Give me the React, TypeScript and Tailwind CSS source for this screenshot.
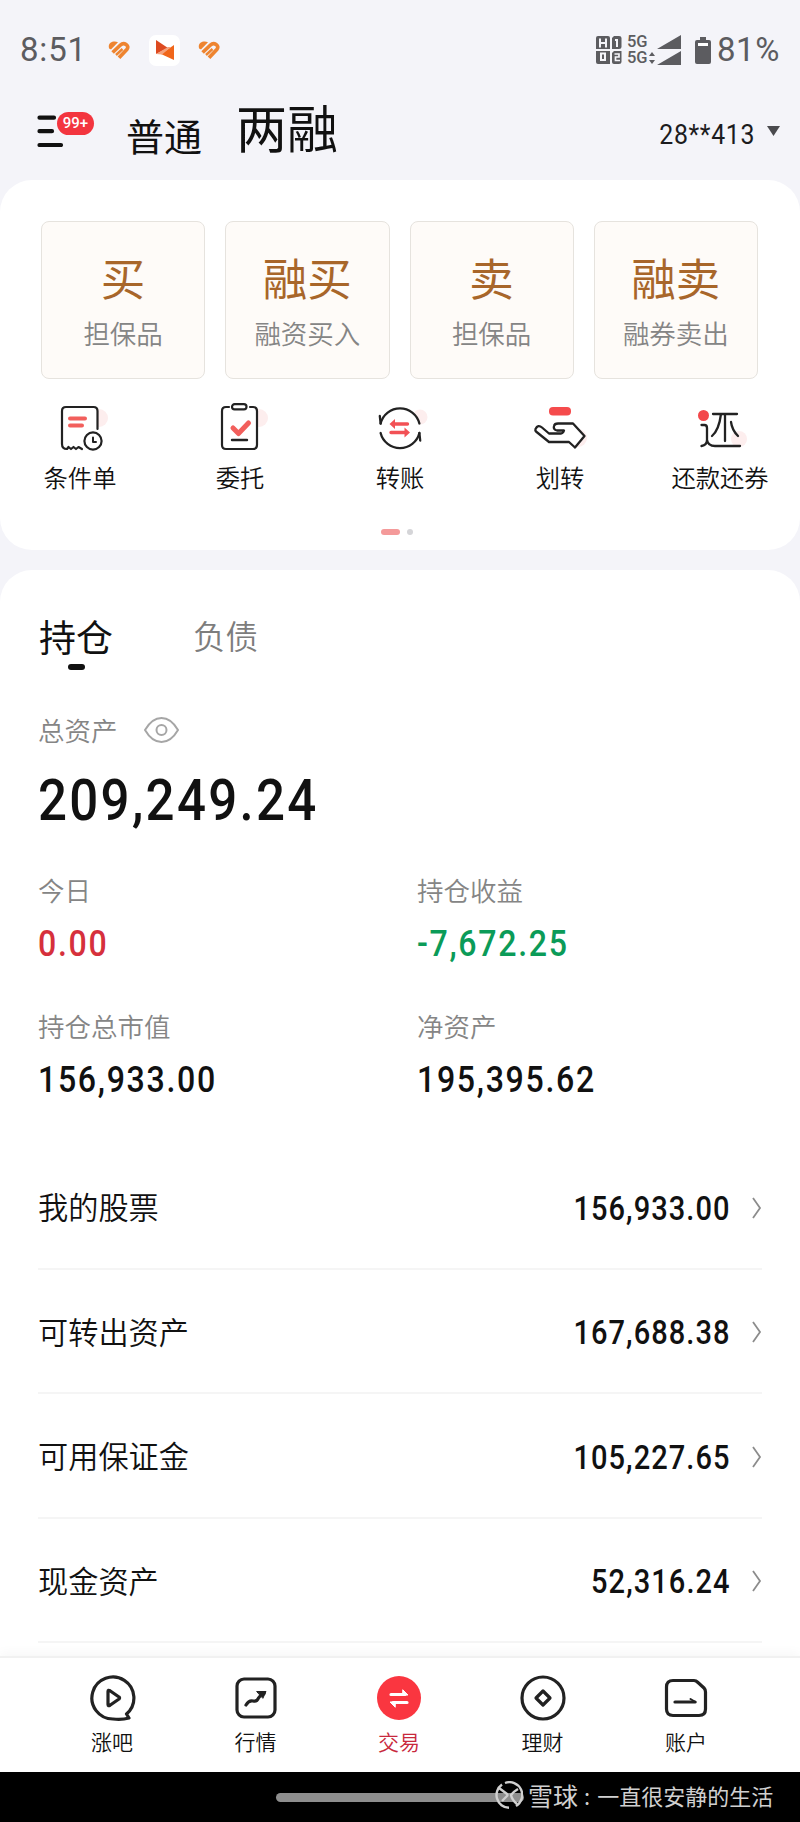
import { ReactNode } from 'react';

const cjk = 'font-["Noto_Sans_CJK_SC",sans-serif]';
const num = 'font-["Roboto","Noto_Sans_CJK_SC",sans-serif]';

const tradeCards = [
  { title: '买', desc: '担保品' },
  { title: '融买', desc: '融资买入' },
  { title: '卖', desc: '担保品' },
  { title: '融卖', desc: '融券卖出' },
];

const assetRows = [
  { label: '我的股票', value: '156,933.00' },
  { label: '可转出资产', value: '167,688.38' },
  { label: '可用保证金', value: '105,227.65' },
  { label: '现金资产', value: '52,316.24' },
];

const HeartLogo = () => (
  <svg width="22" height="19" viewBox="0 0 22 19" fill="none" stroke="#ee8430">
    <path d="M1 7 C-0.500 2 5 -0.800 10 1.200 L3.200 8.200 Q1.500 8.500 1 7 Z" fill="#ee8430" stroke="none" />
    <path d="M4.600 11.500 L12.500 4 C16 0.600 21.800 4.600 19 8.200 L11 16.800" strokeWidth="3.700" />
    <path d="M8 14 L14.500 8" strokeWidth="2.400" />
  </svg>
);

const AppLogo = () => (
  <div className="flex h-[31px] w-[31px] items-center justify-center rounded-[7px] bg-white">
    <svg width="18" height="20" viewBox="0 0 18 20">
      <path d="M0 0 L12 8 L0 14 Z" fill="#dd4a20" />
      <path d="M18 5 V20 L5 14 Z" fill="#f0661a" />
      <path d="M0 14 L12 7 L15 7 L6 14.500 Z" fill="#f5a27c" />
    </svg>
  </div>
);

const StatusBar = () => (
  <div className="flex h-[100px] items-center pl-[20px] pr-[20px] text-[#5c5c60]">
    <span className={`${num} w-[88px] text-[33px] leading-[40px] tracking-[0.8px]`}>8:51</span>
    <HeartLogo />
    <div className="ml-[19px] mr-[18px]">
      <AppLogo />
    </div>
    <HeartLogo />
    <div className="ml-auto flex items-center">
      <svg width="26" height="28" viewBox="0 0 26 28">
        <path
          d="M2 0 H12 Q14 0 14 2 V28 H2 Q0 28 0 26 V2 Q0 0 2 0 Z M18 0 H23 Q25.500 0 25.500 2 V11 Q25.500 13 23 13 H16 V2 Z M18 15 H25.500 V26 Q25.500 28 23 28 H18 Q16 28 16 26 V17 Z"
          fill="#5c5c60"
        />
        <g stroke="#f4f4f9" strokeWidth="2" fill="none">
          <path d="M4 2.500 V11.500 M10 2.500 V11.500 M4 7 H10 M0 14 H14" />
          <path d="M5 17.500 H9 V24 H5 Z" />
          <path d="M19 4 H21 V11" />
          <path d="M18.500 18 H23 V21 H19.500 V24.500 H24" strokeWidth="1.700" />
        </g>
      </svg>
      <div className={`${num} ml-[5px] flex w-[22px] flex-col text-[16.5px] font-medium leading-[16px]`}>
        <span>5G</span>
        <span>5G</span>
      </div>
      <svg width="32" height="30" viewBox="0 0 32 30" fill="#5c5c60">
        <path d="M3 17 L6 21 H0 Z M3 29 L0 25 H6 Z" />
        <path d="M32 0 V14 H8 Z M32 16 V30 H8 Z" />
      </svg>
      <svg className="ml-[14px] mr-[6px]" width="16" height="27" viewBox="0 0 16 27">
        <path d="M5 0 H11 V3 H14 Q16 3 16 5 V25 Q16 27 14 27 H2 Q0 27 0 25 V5 Q0 3 2 3 H5 Z" fill="#5c5c60" />
        <path d="M3 6 H13 V9 H3 Z" fill="#fff" />
      </svg>
      <span className={`${num} text-[33px] leading-[40px] tracking-[0.6px]`}>81%</span>
    </div>
  </div>
);

const Header = () => (
  <header className="flex h-[80px] pl-[37px] pr-[20px]">
    <div className="relative mt-[15px] h-[32px] w-[89px]">
      <svg width="27" height="32" viewBox="0 0 27 32" stroke="#111" strokeWidth="4.200" strokeLinecap="round">
        <path d="M2.500 2.700 H17 M2.500 16.200 H15 M2.500 30 H24" />
      </svg>
      <span className={`${num} absolute -top-[3px] left-[20px] flex h-[23px] w-[37px] items-center justify-center rounded-full bg-[#f3353f] text-[15px] font-medium text-white`}>
        99+
      </span>
    </div>
    <span className="mt-[7px] text-[38px] leading-[56px] text-[#111]">普通</span>
    <span className="-mt-[9px] ml-[34px] text-[51px] leading-[70px] text-[#111]">两融</span>
    <div className="ml-auto mt-[19px] flex h-[32px] items-center">
      <span className={`${num} origin-right scale-x-[0.92] text-[27px] leading-[32px] tracking-[0.7px] text-[#1c1c1e]`}>28**413</span>
      <svg className="-mt-[9px] ml-[12px]" width="13" height="10" viewBox="0 0 13 10" fill="#4a4a4e">
        <path d="M0 0 H13 L6.500 10 Z" />
      </svg>
    </div>
  </header>
);

const OrderIcon = () => (
  <svg className="translate-x-[7px]" width="56" height="52" viewBox="0 0 56 52" fill="none" strokeLinecap="round" strokeLinejoin="round">
    <circle cx="40" cy="16" r="9" fill="#fdeeee" />
    <path
      d="M38.500 27 V9 Q38.500 5 34.500 5 H7 Q3 5 3 9 V42 Q3 47 8 47 L9.500 45 L12 47 L14.500 45 L17 47 L19.500 45 L23 47"
      fill="#fff"
      stroke="#222"
      strokeWidth="2.200"
    />
    <path d="M11 16.500 H26 M11 23.500 H23" stroke="#f25f5c" strokeWidth="4" />
    <circle cx="34" cy="39" r="8.600" fill="#fff" stroke="#222" strokeWidth="2.200" />
    <path d="M34 35.500 V40 H37" stroke="#222" strokeWidth="2" />
  </svg>
);

const EntrustIcon = () => (
  <svg className="translate-x-[7px]" width="56" height="52" viewBox="0 0 56 52" fill="none" strokeLinecap="round" strokeLinejoin="round">
    <circle cx="40" cy="16" r="9" fill="#fdeeee" />
    <path
      d="M10 5 H7 Q3 5 3 9 V43 Q3 47 7 47 H34 Q38 47 38 43 V9 Q38 5 34 5 H31"
      fill="#fff"
      stroke="#222"
      strokeWidth="2.200"
    />
    <rect x="13" y="2.200" width="14.500" height="5.200" rx="2.600" stroke="#222" strokeWidth="2.200" />
    <path d="M14 26 L19.500 31.500 L29.500 21" stroke="#f25f5c" strokeWidth="5" />
    <path d="M13 38 H28" stroke="#222" strokeWidth="2.400" />
  </svg>
);

const TransferIcon = () => (
  <svg width="56" height="52" viewBox="0 0 56 52" fill="none" strokeLinecap="round" strokeLinejoin="round">
    <circle cx="48" cy="15" r="7.500" fill="#fdeeee" />
    <circle cx="28" cy="26" r="19.500" fill="#fff" />
    <g stroke="#222" strokeWidth="2.300">
      <path d="M8.600 21.500 A20 20 0 0 1 47.400 21.500 M47.400 31 A20 20 0 0 1 8.600 31" />
      <path d="M7.800 14 L8.600 21.500 M48.200 38.500 L47.400 31" />
    </g>
    <g stroke="#f25155" strokeWidth="3.400">
      <path d="M22 22 H35.500 M19 30.500 H34" />
    </g>
    <path d="M17.500 22 L23 17 V27 Z M38 30.500 L32.500 25.500 V35.500 Z" fill="#f25155" />
  </svg>
);

const HandIcon = () => (
  <svg width="56" height="52" viewBox="0 0 56 52" fill="none" strokeLinecap="round" strokeLinejoin="round">
    <circle cx="46" cy="36" r="9" fill="#fdeeee" />
    <rect x="17" y="5" width="22" height="8.500" rx="4" fill="#f54b4c" />
    <path
      d="M3.500 27 Q6 22 10 25.500 L17 31.500 H29 Q31 31.500 32 28.500 H25 Q21 27.500 22 24 Q22.500 21.500 26 21.500 H41 L52.500 34 L43 45.500 L37 40 H17 L4 29.500 Q3 28.500 3.500 27 Z"
      fill="#fff"
      stroke="#222"
      strokeWidth="2.300"
    />
  </svg>
);

const RepayIcon = () => (
  <svg width="56" height="52" viewBox="0 0 56 52" fill="none" strokeLinecap="round" strokeLinejoin="round">
    <circle cx="47" cy="37" r="8" fill="#fdeeee" />
    <circle cx="11.500" cy="13.500" r="5.500" fill="#f3484b" />
    <g stroke="#222" strokeWidth="2.300">
      <path d="M9.500 23 H12.500 Q15 23 15 26 V38 Q15 43 9.500 44 M15 38 Q16 44 23 44 H48" />
      <path d="M21 12 H45 M33 12 V39 M29 12 Q27 28 20 34 M39 20 Q40 28 46 34" />
    </g>
  </svg>
);

const shortcuts: { label: string; icon: ReactNode }[] = [
  { label: '条件单', icon: <OrderIcon /> },
  { label: '委托', icon: <EntrustIcon /> },
  { label: '转账', icon: <TransferIcon /> },
  { label: '划转', icon: <HandIcon /> },
  { label: '还款还券', icon: <RepayIcon /> },
];

const TradePanel = () => (
  <section className="h-[370px] rounded-[32px] bg-white pt-[41px]">
    <div className="grid grid-cols-4 gap-[20px] pl-[41px] pr-[42px]">
      {tradeCards.map((c, i) => (
        <div key={i} className="flex h-[158px] flex-col items-center rounded-[8px] border border-[#e6e3de] bg-[#fefbf8] pt-[22px]">
          <span className="text-[44.5px] leading-[66px] text-[#a8662a]">{c.title}</span>
          <span className="mt-[5px] text-[26.5px] font-[350] leading-[36px] text-[#858585]">{c.desc}</span>
        </div>
      ))}
    </div>
    <div className="mt-[23px] grid grid-cols-5">
      {shortcuts.map((s) => (
        <div key={s.label} className="flex flex-col items-center">
          {s.icon}
          <span className="mt-[5px] text-[24.3px] font-[350] leading-[36px] text-[#111]">{s.label}</span>
        </div>
      ))}
    </div>
    <div className="mt-[34px] flex items-center justify-center gap-[7px] pr-[6px]">
      <span className="h-[6px] w-[19px] rounded-full bg-[#f49a9a]" />
      <span className="h-[6px] w-[6px] rounded-full bg-[#d5d5d8]" />
    </div>
  </section>
);

const Stat = ({ label, value, color }: { label: string; value: string; color: string }) => (
  <div className="h-[136px]">
    <p className="text-[26.5px] font-[350] leading-[38px] text-[#858585]">{label}</p>
    <p className={`${num} mt-[12px] origin-left scale-x-[0.88] text-[36.5px] font-medium leading-[46px] tracking-[1.9px] ${color}`}>{value}</p>
  </div>
);

const Holdings = () => (
  <section className="h-[1086px] overflow-hidden rounded-t-[32px] bg-white px-[38px] pt-[40px]">
    <div className="flex h-[60px] items-start">
      <div className="relative pl-px text-[37px] leading-[52px] text-[#111]">
        持仓
        <span className="absolute left-[30px] top-[54px] h-[6px] w-[17px] rounded-full bg-[#111]" />
      </div>
      <span className="ml-[80px] text-[32.5px] font-[350] leading-[50px] text-[#7d7d7d]">负债</span>
    </div>
    <div className="mt-[41px] flex items-center">
      <span className="text-[26.5px] font-[350] leading-[38px] text-[#858585]">总资产</span>
      <svg className="ml-[26px]" width="35" height="26" viewBox="0 0 35 26" fill="none" stroke="#a6a6a6" strokeWidth="2">
        <path d="M1 13 Q8 1 17.500 1 Q27 1 34 13 Q27 25 17.500 25 Q8 25 1 13 Z" />
        <circle cx="17.500" cy="13" r="5" />
      </svg>
    </div>
    <p className={`${num} mt-[16px] origin-left scale-x-[0.88] text-[58px] font-medium leading-[70px] tracking-[2.6px] text-[#111]`}>209,249.24</p>
    <div className="mt-[36px] grid grid-cols-[379px_1fr]">
      <Stat label="今日" value="0.00" color="text-[#d6303c]" />
      <Stat label="持仓收益" value="-7,672.25" color="text-[#0b9b58]" />
      <Stat label="持仓总市值" value="156,933.00" color="text-[#111]" />
      <Stat label="净资产" value="195,395.62" color="text-[#111]" />
    </div>
    <div className="mt-[2px]">
      {assetRows.map((r) => (
        <div key={r.label} className="flex h-[124.5px] items-center border-b-2 border-[#f5f5f5]">
          <span className="text-[30.2px] font-[350] leading-[44px] text-[#111]">{r.label}</span>
          <span className={`${num} ml-auto mt-[5px] origin-right scale-x-[0.88] text-[33px] font-medium leading-[44px] tracking-[1.2px] text-[#111]`}>
            {r.value}
          </span>
          <svg className="ml-[21px] mt-[3px]" width="10" height="22" viewBox="0 0 10 22" fill="none" stroke="#8c8c8c" strokeWidth="1.800">
            <path d="M1 1 L8 11 L1 21" />
          </svg>
        </div>
      ))}
    </div>
  </section>
);

const tabs: { label: string; active?: boolean; icon: ReactNode }[] = [
  {
    label: '涨吧',
    icon: (
      <>
        <path d="M38.500 40 A21 21 0 1 0 25 45 Q34 46 41 44 Z" />
        <path d="M20 17.500 V30.500 Q20 32.500 22 31.300 L31 25 Q32 24 31 23 L22 16.700 Q20 15.500 20 17.500 Z" />
      </>
    ),
  },
  {
    label: '行情',
    icon: (
      <>
        <rect x="5" y="5" width="38" height="38" rx="7" />
        <path d="M14 31 Q17 26 21 27 Q25 28 26.500 24 Q28 21 32 19.500" />
        <path d="M25 17.500 H34 L31 24 Z" fill="#222" strokeWidth="1" />
      </>
    ),
  },
  {
    label: '交易',
    active: true,
    icon: (
      <>
        <circle cx="24" cy="24" r="22" fill="#fa3640" stroke="none" />
        <path d="M16 20.500 H30 M18 28.500 H32" stroke="#fff" />
        <path d="M28 16 L33 21 H28 Z M20 33 L15 28 H20 Z" fill="#fff" stroke="#fff" strokeWidth="1" />
      </>
    ),
  },
  {
    label: '理财',
    icon: (
      <>
        <circle cx="24" cy="24" r="21" />
        <path d="M24 17 L31 24 L24 31 L17 24 Z" />
      </>
    ),
  },
  {
    label: '账户',
    icon: (
      <>
        <path d="M11 6.500 H32 Q34 6.500 36 8.500 L42 14 Q43.500 15.500 43.500 18 V35 Q43.500 41.500 37 41.500 H11 Q4.500 41.500 4.500 35 V13 Q4.500 6.500 11 6.500 Z" />
        <path d="M13 28 H33" />
        <path d="M28.500 25 L33.500 28" strokeWidth="2" />
      </>
    ),
  },
];

const TabBar = () => (
  <nav className="relative flex h-[116px] justify-center border-t-2 border-[#f1f1f1] bg-white pr-[2px] pt-[16px] shadow-[0_-4px_10px_rgba(0,0,0,0.03)]">
    {tabs.map((t) => (
      <div key={t.label} className="flex w-[143.5px] flex-col items-center">
        <svg width="48" height="48" viewBox="0 0 48 48" fill="none" stroke="#222" strokeWidth="3.200" strokeLinecap="round" strokeLinejoin="round">
          {t.icon}
        </svg>
        <span className={`mt-[4px] text-[21px] font-[350] leading-[30px] ${t.active ? 'text-[#c8283c]' : 'text-[#111]'}`}>{t.label}</span>
      </div>
    ))}
  </nav>
);

const GestureBar = () => (
  <footer className="relative flex h-[50px] items-center justify-center bg-black">
    <div className="h-[9px] w-[248px] rounded-full bg-[#8e8e8e]" />
    <div className="absolute left-[495px] top-[7px] flex h-[32px] items-center text-[#d0d0d0]">
      <svg width="28" height="28" viewBox="0 0 28 28" fill="none" stroke="#d0d0d0" strokeWidth="2.400">
        <path d="M7 3.500 A12.800 12.800 0 0 0 14 26.800 M10 2 A12.800 12.800 0 0 1 21 25" />
        <path d="M4 7 L12 13 Q13 14 11.500 15.500 L7 20 M23 8 Q18 11 16 14 Q17 19 22 23" />
      </svg>
      <span className="ml-[5px] text-[25px] leading-[32px]">雪球</span>
      <span className="ml-[6px] text-[22px] leading-[32px]">:</span>
      <span className="ml-[7px] text-[22px] leading-[32px]">一直很安静的生活</span>
    </div>
  </footer>
);

const App = () => (
  <div className={`${cjk} w-[800px] bg-[#f4f4f9]`}>
    <StatusBar />
    <Header />
    <TradePanel />
    <div className="h-[20px]" />
    <Holdings />
    <TabBar />
    <GestureBar />
  </div>
);

export default App;
